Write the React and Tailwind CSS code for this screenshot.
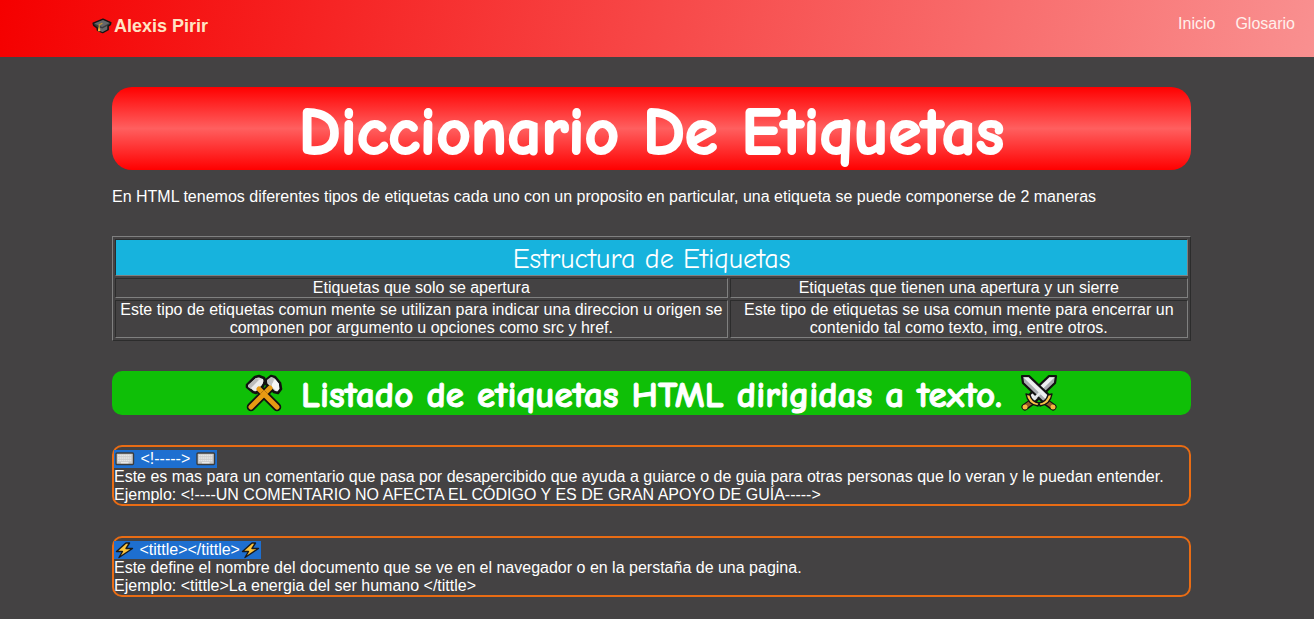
function GraduationCap() {
  return (
    <svg viewBox="0 0 20 18" className="h-[18px] w-5 shrink-0" aria-hidden="true">
      <path d="M1.2 6.3 11 2.2l7.800 3.500-.4 2-2.200 1.300v3.600l-5.500 3-5.200-2.200-.4-2.600-3.400-2.400z" fill="#3a3a3c" stroke="#151515" strokeWidth="1.500" strokeLinejoin="round" />
      <path d="m2.200 6.600 8.800-3.500 6.600 3-7.400 3.800z" fill="#66676a" />
      <path d="M6 10v3l4.500 2 4.600-2.600V9l-4.800 2.400z" fill="#68696c" />
      <path d="m10.400 6.200-3.200 1.600v4.800" fill="none" stroke="#d09a2d" strokeWidth="1.100" />
      <path d="M6.300 11.500h1.800l.2 2.800H5.800z" fill="#f0b43a" />
    </svg>
  );
}

function Hammers() {
  return (
    <svg viewBox="0 0 38 38" className="h-[38px] w-[38px] shrink-0" aria-hidden="true">
      <path d="M14 15 32 33M24 15 6 33" stroke="#111" strokeWidth="8.500" strokeLinecap="round" />
      <path d="M2 11 10 3l4-1 5 2 1 3-2 5-7 7-3-1-6-5z" fill="#d5d5d5" stroke="#111" strokeWidth="2.600" strokeLinejoin="round" />
      <path d="M21 6 26 2l4 1 5 6 1 6-3 4-4-1-8-8z" fill="#d5d5d5" stroke="#111" strokeWidth="2.600" strokeLinejoin="round" />
      <path d="m3 11 8-7 3 2-8 9-3-2z" fill="#bcbcbc" />
      <path d="m6 14 8-8 4-1v4l-7 8-3-1z" fill="#ededed" />
      <path d="m22 6 4-3 3 1-2 8-5-4z" fill="#c2c2c2" />
      <path d="m27 10 3-5 4 5v5l-2 2-5-4z" fill="#f6f6f6" />
      <path d="M25 14 6 33M14 15l18 18" stroke="#e79a13" strokeWidth="5" strokeLinecap="round" />
      <path d="m15 20 4-4 4 4" fill="none" stroke="#b9750c" strokeWidth="1" />
    </svg>
  );
}

function Swords() {
  return (
    <svg viewBox="0 0 38 38" className="h-[38px] w-[38px] shrink-0" aria-hidden="true">
      <path d="m5 33 7-5M33 33l-7-5" stroke="#111" strokeWidth="7" strokeLinecap="round" />
      <path d="m6 32 7-5M32 32l-7-5" stroke="#945b25" strokeWidth="4" />
      <path d="M36 2h-7L8 22l6 7L35 9z" fill="#a9acb1" stroke="#111" strokeWidth="2.200" strokeLinejoin="round" />
      <path d="M34.500 3.500h-5L10 22l2.500 3z" fill="#eef0f2" />
      <path d="M2 2h7l21 20-6 7L3 9z" fill="#a9acb1" stroke="#111" strokeWidth="2.200" strokeLinejoin="round" />
      <path d="M3.500 3.500h5L28 22l-2.500 3z" fill="#eef0f2" />
      <path d="M19 18 11 26l2 2 9-9z" fill="#e5e8eb" />
      <path d="M6 20c1 6 5 11 12 12l1-3c-5-1-8-4-9-8zM32 20c-1 6-5 11-12 12l-1-3c5-1 8-4 9-8z" fill="#f9c348" stroke="#111" strokeWidth="1.400" strokeLinejoin="round" />
      <circle cx="5" cy="33" r="2.500" fill="#f5b740" />
      <circle cx="33" cy="33" r="2.500" fill="#f5b740" />
    </svg>
  );
}

function Keyboard() {
  return (
    <svg viewBox="0 0 22 16" className="h-4 w-[22px] shrink-0" aria-hidden="true">
      <rect x="2" y="2" width="17.500" height="11.500" rx="1" fill="#c9c9c9" stroke="#3c3c3c" strokeWidth="1.400" />
      <path d="M4 4.500h13.500M4 7h13.500M4 9.500h13.500" stroke="#e6e6e6" strokeWidth="1.500" strokeDasharray="1.500 .4" />
      <path d="M7 11.700h7.500" stroke="#ededed" strokeWidth="1.200" />
    </svg>
  );
}

function Bolt() {
  return (
    <svg viewBox="0 0 21 18" className="h-[18px] w-[21px] shrink-0" aria-hidden="true">
      <path d="M12 2h3.500L12 7.500h6.500L5 16.500l3.500-6H2.500z" fill="#fcc43c" stroke="#17191c" strokeWidth="1.400" strokeLinejoin="round" />
    </svg>
  );
}

function Entry({ heading, description, example }) {
  return (
    <article className="rounded-[10px] border-2 border-[#e96c14] pt-[3px]">
      <h3 className="flex h-[18px] w-fit items-center bg-[#1e6fd0] whitespace-pre">{heading}</h3>
      <p>{description}</p>
      <p>Ejemplo: {example}</p>
    </article>
  );
}

const cell =
  "border border-t-[#2c2c2c] border-l-[#2c2c2c] border-r-[#808080] border-b-[#808080] px-1 text-center font-normal";
const comic = "font-['Comic_Sans_MS','Comic_Neue',Lato,sans-serif]";

export default function App() {
  return (
    <div className="min-h-screen bg-[#444243] font-['Liberation_Sans',Arial,sans-serif] text-base leading-[18px] text-white">
      <header className="flex h-[57px] items-start justify-between bg-[linear-gradient(100deg,#f50000,#f99090)] pr-[19px] pl-[92px]">
        <a href="#inicio" className="flex items-center gap-0.5 pt-4 text-lg leading-5 font-bold text-[#ffe4c4]">
          <GraduationCap />
          Alexis Pirir
        </a>
        <nav className="flex gap-5 pt-[15px] text-[#fff0ec]">
          <a href="#inicio">Inicio</a>
          <a href="#glosario">Glosario</a>
        </nav>
      </header>

      <main className="mr-[123px] ml-28 pt-[30px] pb-[22px]">
        <h1 className={`${comic} flex h-[83px] items-center justify-center rounded-[20px] bg-[linear-gradient(red,#ff5f5f,red)] pt-2 text-[67px] leading-none font-bold whitespace-nowrap [-webkit-text-stroke:2px_white]`}>
          Diccionario De Etiquetas
        </h1>
        <p className="mt-[18px]">
          En HTML tenemos diferentes tipos de etiquetas cada uno con un proposito en particular, una etiqueta se puede componerse de 2 maneras
        </p>

        <table className="mt-[30px] w-full table-fixed border-separate border-spacing-[2px] border border-t-[#808080] border-r-[#2c2c2c] border-b-[#2c2c2c] border-l-[#808080]">
          <colgroup>
            <col className="w-[57.2%]" />
            <col />
          </colgroup>
          <thead>
            <tr>
              <th colSpan={2} className={`${cell} ${comic} bg-[#17b3dd] pt-1 text-[28px] leading-[31px]`}>
                Estructura de Etiquetas
              </th>
            </tr>
          </thead>
          <tbody>
            <tr>
              <td className={cell}>Etiquetas que solo se apertura</td>
              <td className={cell}>Etiquetas que tienen una apertura y un sierre</td>
            </tr>
            <tr>
              <td className={cell}>
                Este tipo de etiquetas comun mente se utilizan para indicar una direccion u origen se componen por argumento u opciones como src y href.
              </td>
              <td className={cell}>
                Este tipo de etiquetas se usa comun mente para encerrar un contenido tal como texto, img, entre otros.
              </td>
            </tr>
          </tbody>
        </table>

        <h2 className={`${comic} mt-[30px] flex h-11 items-center justify-center gap-[18px] rounded-[10px] bg-[#0fbf07] text-[37px] leading-none font-bold whitespace-nowrap [-webkit-text-stroke:1px_white]`}>
          <Hammers />
          <span className="pt-1">Listado de etiquetas HTML dirigidas a texto.</span>
          <Swords />
        </h2>

        <section className="mt-[30px] flex flex-col gap-[30px]">
          <Entry
            heading={<><Keyboard />{" <!-----> "}<Keyboard /></>}
            description="Este es mas para un comentario que pasa por desapercibido que ayuda a guiarce o de guia para otras personas que lo veran y le puedan entender."
            example="<!----UN COMENTARIO NO AFECTA EL CÓDIGO Y ES DE GRAN APOYO DE GUÍA----->"
          />
          <Entry
            heading={<><Bolt />{" <tittle></tittle>"}<Bolt /></>}
            description="Este define el nombre del documento que se ve en el navegador o en la perstaña de una pagina."
            example="<tittle>La energia del ser humano </tittle>"
          />
        </section>
      </main>
    </div>
  );
}
